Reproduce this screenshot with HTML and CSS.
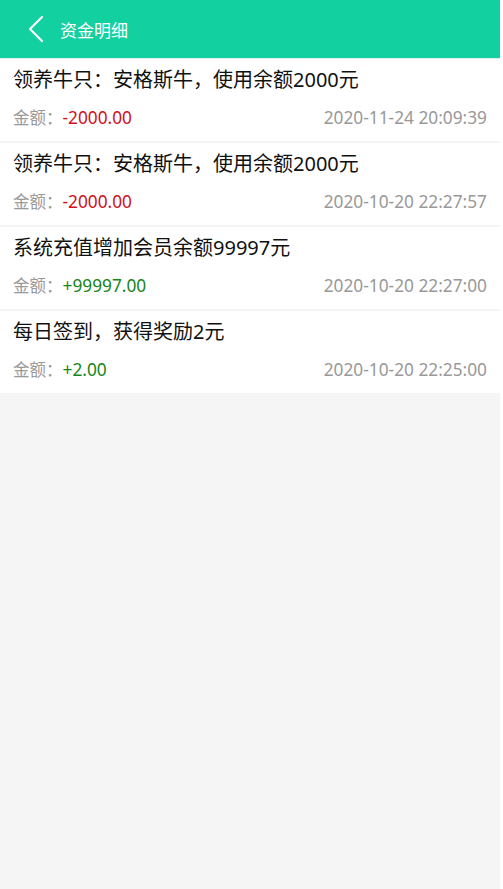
FILE: index.html
```html
<!DOCTYPE html>
<html lang="zh-CN">
<head>
<meta charset="utf-8">
<title>资金明细</title>
<link rel="stylesheet" href="styles.css">
</head>
<body>
<div class="app">
  <header class="topbar">
    <span class="back">
      <svg width="18" height="28" viewBox="0 0 18 28"><path d="M15 2 L3 14 L15 26" fill="none" stroke="#fff" stroke-width="2.2" stroke-linecap="round" stroke-linejoin="round"/></svg>
    </span>
    <span class="title">资金明细</span>
  </header>
  <ul class="list">
    <li class="item">
      <div class="desc">领养牛只：安格斯牛，使用余额2000元</div>
      <div class="meta"><span class="amt"><span class="label">金额：</span><span class="neg">-2000.00</span></span><span class="time">2020-11-24 20:09:39</span></div>
    </li>
    <li class="item">
      <div class="desc">领养牛只：安格斯牛，使用余额2000元</div>
      <div class="meta"><span class="amt"><span class="label">金额：</span><span class="neg">-2000.00</span></span><span class="time">2020-10-20 22:27:57</span></div>
    </li>
    <li class="item">
      <div class="desc">系统充值增加会员余额99997元</div>
      <div class="meta"><span class="amt"><span class="label">金额：</span><span class="pos">+99997.00</span></span><span class="time">2020-10-20 22:27:00</span></div>
    </li>
    <li class="item">
      <div class="desc">每日签到，获得奖励2元</div>
      <div class="meta"><span class="amt"><span class="label">金额：</span><span class="pos">+2.00</span></span><span class="time">2020-10-20 22:25:00</span></div>
    </li>
  </ul>
</div>
</body>
</html>
```

FILE: styles.css
```css
html, body {
  margin: 0;
  padding: 0;
  background: #fff;
  height: 100%;
}
body {
  font-family: "Noto Sans", "Noto Sans CJK SC", sans-serif;
}
.app {
  width: 500px;
  min-height: 889px;
  background: #f5f5f5;
}
.topbar {
  height: 59px;
  background: #12d0a0;
  display: flex;
  align-items: center;
  padding-left: 27px;
  box-sizing: border-box;
  border-bottom: 1px solid #d8f3ec;
}
.back {
  display: flex;
  width: 33px;
}
.title {
  color: #fff;
  font-size: 17px;
}
.list {
  list-style: none;
  margin: 0;
  padding: 0;
  display: flex;
  flex-direction: column;
  gap: 2px;
}
.item {
  background: #fff;
  height: 82px;
  padding: 0 13px;
  box-sizing: border-box;
}
.desc {
  height: 42px;
  line-height: 42px;
  font-size: 20px;
  color: #111;
}
.meta {
  display: flex;
  justify-content: space-between;
  align-items: center;
  height: 32px;
  font-size: 17.3px;
}
.label {
  font-size: 16.5px;
}
.label, .time {
  color: #999;
}
.neg { color: #d0111b; }
.pos { color: #16861a; }
```
